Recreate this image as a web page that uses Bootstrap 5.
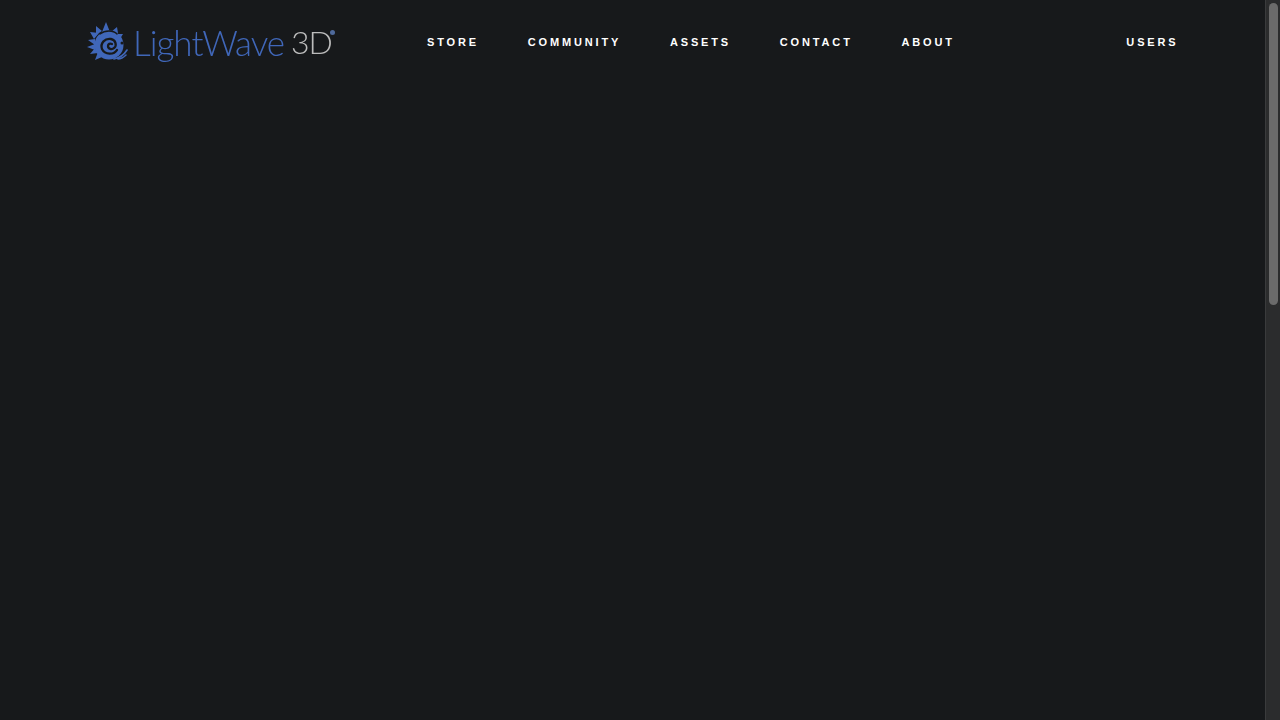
<!DOCTYPE html>
<html lang="en">
<head>
  <meta charset="UTF-8" />
  <meta name="viewport" content="width=device-width, initial-scale=1" />
  <title>LightWave 3D</title>
  <link href="https://cdn.jsdelivr.net/npm/bootstrap@5.3.3/dist/css/bootstrap.min.css" rel="stylesheet" />
  <style>
    html, body { height: 100%; }
    body {
      background: #17191b;
      overflow: hidden;
    }
    .page-area { min-width: 0; }
    .top-bar { height: 84px; padding: 0 86.5px 0 87px; }
    .brand-link {
      width: 340px;
      font-family: "Lato", "Liberation Sans", sans-serif;
      font-weight: 300;
      font-size: 35px;
      line-height: 40px;
      letter-spacing: -1px;
      color: #4067b9;
      text-decoration: none;
      filter: blur(0.3px);
    }
    .brand-link:hover { color: #4067b9; }
    .brand-3d {
      color: #bcbcbc;
      font-size: 32px;
      margin-left: 7px;
      position: relative;
    }
    .brand-reg {
      position: absolute;
      top: 8px;
      right: -3px;
      width: 5px;
      height: 5px;
      border-radius: 50%;
      background: #4f6a9c;
    }
    .brand-mark { margin-right: 5px; }
    .main-links { gap: 48.75px; }
    .top-link {
      font-family: "Liberation Sans", Arial, sans-serif;
      font-weight: 700;
      font-size: 11px;
      letter-spacing: 2.85px;
      line-height: 14px;
      color: #fff;
      text-decoration: none;
    }
    .top-link:hover { color: #fff; }
    .fake-scroll {
      width: 15px;
      background: #2b2c2d;
      border-left: 1px solid #3a3b3c;
      padding: 3px 2px 0 3px;
    }
    .fake-thumb {
      height: 302px;
      background: #6b6b6b;
      border-radius: 5px;
    }
  </style>
</head>
<body class="d-flex">
  <div class="page-area flex-grow-1">
    <nav class="top-bar d-flex align-items-center">
      <a href="#" class="brand-link d-flex align-items-center">
        <svg class="brand-mark" width="41" height="41" viewBox="0 0 41 41" fill="none">
          <path fill="#4067b9" d="M19 0l-4 10 8 0zM9 4l0 9 6-4zM3 10l4 7 5-6zM1 18l7-1 0 6zM0 25l8-3 0 6zM3 32l5-6 3 5zM8 38l3-8 4 5zM30 5l-6 5 7 1zM36 12l-6 0 3 5z"/>
          <circle cx="22" cy="23" r="14.5" fill="#4067b9"/>
          <path stroke="#17191b" stroke-width="2.3" stroke-linecap="round" d="M30 28c-3 5-12 5-15-1-2-6 3-11 9-10 5 1 6 7 3 9-2 2-6 1-6-2 0-2 2-3 4-2"/>
          <path stroke="#17191b" stroke-width="1.3" stroke-linecap="round" d="M13 12c5-4 13-4 17 0"/>
          <circle cx="35" cy="21" r="1.5" fill="#17191b"/>
          <path stroke="#4067b9" stroke-width="1.6" stroke-linecap="round" d="M27 37c5-1 10-4 13-9M31 37c3 0 6-2 8-4"/>
        </svg>
        <span>LightWave</span><span class="brand-3d">3D<span class="brand-reg"></span></span>
      </a>
      <div class="main-links d-flex align-items-center">
        <a href="#" class="top-link">STORE</a>
        <a href="#" class="top-link">COMMUNITY</a>
        <a href="#" class="top-link">ASSETS</a>
        <a href="#" class="top-link">CONTACT</a>
        <a href="#" class="top-link">ABOUT</a>
      </div>
      <a href="#" class="top-link ms-auto">USERS</a>
    </nav>
  </div>
  <div class="fake-scroll flex-shrink-0">
    <div class="fake-thumb"></div>
  </div>
</body>
</html>
